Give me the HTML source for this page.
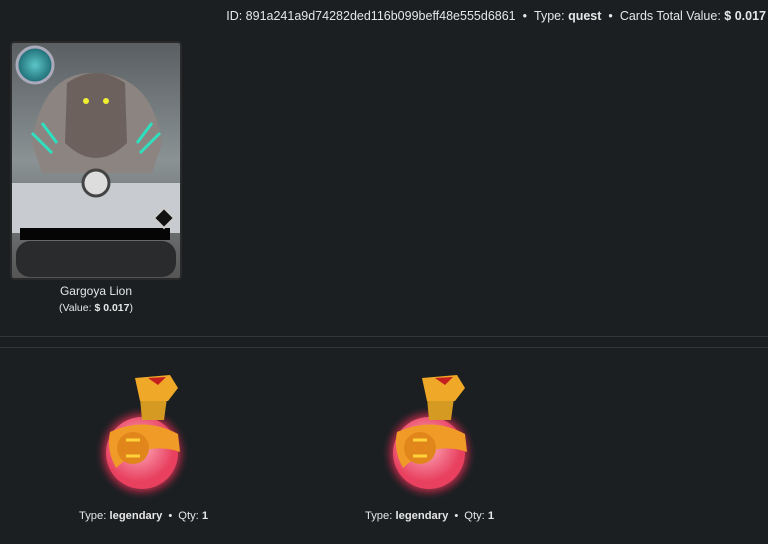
<!DOCTYPE html>
<html><head><meta charset="utf-8"><style>
*{margin:0;padding:0;box-sizing:border-box}
body{width:768px;height:544px;background:#1b1f22;font-family:"Liberation Sans",sans-serif;color:#e6e6e6;position:relative;overflow:hidden}
.hdr{position:absolute;top:9px;right:2px;font-size:12.5px;white-space:nowrap}
b{font-weight:bold}
.dot{margin:0 7px}
.line{position:absolute;left:0;width:768px;height:1px;background:#30363a}
.card{position:absolute;left:10px;top:41px;width:172px;height:239px;border-radius:4px;background:#111;border:2px solid #2a2a2a;overflow:hidden}
.lbl{position:absolute;text-align:center;font-size:12.5px}
.ptxt{position:absolute;font-size:11.2px;white-space:nowrap;top:510px}
.ptxt .dot{margin:0 6px}
</style></head><body>
<div class="hdr">ID: 891a241a9d74282ded116b099beff48e555d6861<span class="dot">•</span>Type: <b>quest</b><span class="dot">•</span>Cards Total Value: <b>$ 0.017</b></div>
<div class="card">
<svg width="168" height="235" viewBox="0 0 168 235">
<defs><linearGradient id="bg" x1="0" y1="0" x2="0" y2="1"><stop offset="0" stop-color="#5a5f62"/><stop offset="0.5" stop-color="#8a9294"/><stop offset="1" stop-color="#555"/></linearGradient>
<radialGradient id="orb"><stop offset="0" stop-color="#5cc6c8"/><stop offset="1" stop-color="#1d6a74"/></radialGradient></defs>
<rect width="168" height="235" fill="url(#bg)"/>
<path d="M20 100 Q30 30 80 30 Q140 30 150 100 L140 130 L30 130Z" fill="#8c8480"/>
<path d="M55 40 Q84 20 113 40 L115 100 Q84 130 53 100Z" fill="#6d615d"/>
<circle cx="74" cy="58" r="3" fill="#ee3"/><circle cx="94" cy="58" r="3" fill="#ee3"/>
<path d="M20 90 L40 110 M30 80 L45 100 M148 90 L128 110 M140 80 L125 100" stroke="#2fe0c0" stroke-width="3"/>
<rect x="0" y="140" width="168" height="50" fill="#c8ccd0"/>
<rect x="8" y="185" width="150" height="12" fill="#050505"/>
<rect x="4" y="198" width="160" height="36" rx="14" fill="#2a2b2d"/>
<circle cx="84" cy="140" r="13" fill="#ddd" stroke="#444" stroke-width="3"/>
<circle cx="23" cy="22" r="18" fill="url(#orb)" stroke="#aab" stroke-width="3"/>
<path d="M152 165 L162 175 L152 185 L142 175Z" fill="#111" stroke="#ccc" stroke-width="2"/>
</svg></div>
<div class="lbl" style="left:10px;width:172px;top:284px;font-size:12px">Gargoya Lion</div>
<div class="lbl" style="left:10px;width:172px;top:302px;font-size:10.5px">(Value: <b>$ 0.017</b>)</div>
<div class="line" style="top:336px"></div>
<div class="line" style="top:347px"></div>
<svg width="0" height="0" style="position:absolute"><defs>
<radialGradient id="gl"><stop offset="0.6" stop-color="#ff5a7a"/><stop offset="0.8" stop-color="#c02848" stop-opacity="0.55"/><stop offset="1" stop-color="#1b1f22" stop-opacity="0"/></radialGradient>
<radialGradient id="gb" cx="0.45" cy="0.4"><stop offset="0" stop-color="#ffb0c0"/><stop offset="1" stop-color="#e8405e"/></radialGradient>
<g id="pot">
<circle cx="52" cy="83" r="48" fill="url(#gl)"/>
<circle cx="52" cy="83" r="36" fill="url(#gb)"/>
<path d="M50 28 L77 28 L74 50 L52 50Z" fill="#d49a22"/>
<path d="M45 8 L80 5 L88 18 L78 31 L50 31Z" fill="#f0a828"/>
<path d="M58 8 L76 7 L68 15Z" fill="#c42020"/>
<path d="M20 62 Q55 46 88 64 L90 82 Q55 70 26 98 Q16 80 20 62Z" fill="#f09a28"/>
<circle cx="43" cy="78" r="16" fill="#e0861a"/>
<path d="M36 70 L50 70 M36 86 L50 86" stroke="#ffd23a" stroke-width="3"/>
</g></defs></svg>
<svg style="position:absolute;left:90px;top:370px" width="110" height="135" viewBox="0 0 110 135"><use href="#pot"/></svg>
<svg style="position:absolute;left:377px;top:370px" width="110" height="135" viewBox="0 0 110 135"><use href="#pot"/></svg>
<div class="ptxt" style="left:79px">Type: <b>legendary</b><span class="dot">•</span>Qty: <b>1</b></div>
<div class="ptxt" style="left:365px">Type: <b>legendary</b><span class="dot">•</span>Qty: <b>1</b></div>
</body></html>
